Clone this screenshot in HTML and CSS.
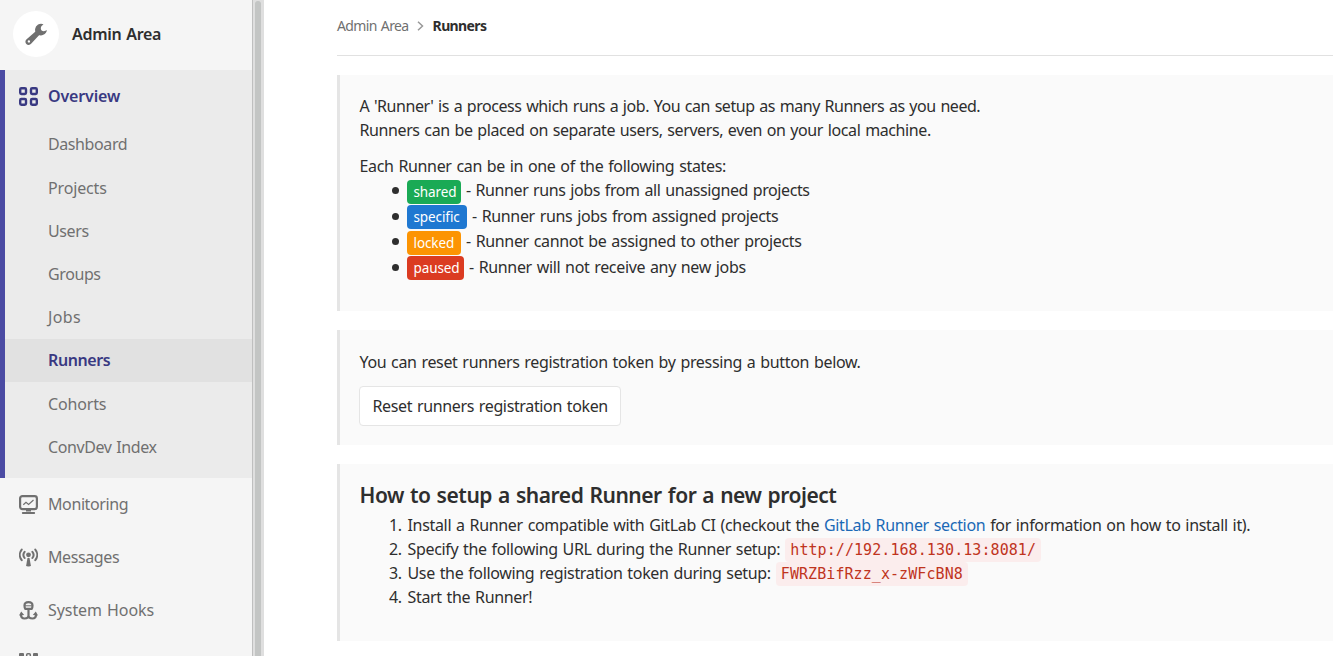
FILE: index.html
```html
<!DOCTYPE html>
<html lang="en">
<head>
<meta charset="utf-8">
<title>Runners · Admin Area</title>
<link rel="stylesheet" href="styles.css">
</head>
<body>
<div class="page">
  <nav class="sidebar">
    <div class="context">
      <span class="avatar"><svg width="22" height="22" viewBox="0 0 22 22"><path fill="#707070" fill-rule="evenodd" d="M11.1 8.1 1.6 16.3a3.2 3.2 0 1 0 4.5 4.5l8.4-9.1zM3.9 17.2a1.2 1.2 0 1 1 0 2.4 1.2 1.2 0 0 1 0-2.4z"/><path fill="#707070" d="M18.5 1.2a6 6 0 0 0-8.4 4.9c-.5 4.2 4 7.7 8.2 5.7 2.3-1 3.6-3.1 3.5-4.8-1.1.6-1.7 1.2-3 1.2-1.7 0-3-1.3-3-3s1.2-2.7 2.7-4z"/></svg></span>
      <span class="context-title">Admin Area</span>
    </div>
    <section class="group">
      <a class="item item-active">
        <svg class="icon" viewBox="0 0 19 19" fill="none" stroke="#393982" stroke-width="2.4"><rect x="1.2" y="1.2" width="5.8" height="5.8" rx="1.2"/><rect x="12" y="1.2" width="5.8" height="5.8" rx="1.2"/><rect x="1.2" y="12" width="5.8" height="5.8" rx="1.2"/><rect x="12" y="12" width="5.8" height="5.8" rx="1.2"/></svg>
        <span class="label-overview">Overview</span>
      </a>
      <ul class="sub">
        <li class="raised"><span>Dashboard</span></li>
        <li class="spaced"><span>Projects</span></li>
        <li><span>Users</span></li>
        <li><span>Groups</span></li>
        <li class="jobs"><span>Jobs</span></li>
        <li class="current raised"><span>Runners</span></li>
        <li class="spaced"><span>Cohorts</span></li>
        <li><span>ConvDev Index</span></li>
      </ul>
    </section>
    <a class="item">
      <svg class="icon" viewBox="0 0 19 19" fill="none" stroke="#707070"><rect x="1.1" y="1.1" width="16.8" height="13" rx="2.3" stroke-width="2.2"/><path d="M4.3 9.8 7 7.2 9.6 9.5 14.5 5" stroke-width="1.2"/><path d="M7 15.5h5" stroke-width="2"/><path d="M3.8 18h11.4" stroke-width="1.9" stroke-linecap="round"/></svg>
      <span>Monitoring</span>
    </a>
    <a class="item">
      <svg class="icon" viewBox="0 0 19 19" fill="none" stroke="#707070" stroke-width="2" stroke-linecap="round"><circle cx="9.5" cy="6.8" r="2.4" fill="#707070" stroke="none"/><path d="M5.6 3.8a5 5 0 0 0 0 6.2M13.4 3.8a5 5 0 0 1 0 6.2M2.7 1.6a8.5 8.5 0 0 0 0 10.6M16.3 1.6a8.5 8.5 0 0 1 0 10.6"/><path fill="#707070" stroke="none" d="M8.5 10h2l1.3 7.2q.1 1.3-2.3 1.3t-2.3-1.3z"/></svg>
      <span>Messages</span>
    </a>
    <a class="item">
      <svg class="icon" viewBox="0 0 19 19" fill="none" stroke="#707070" stroke-width="2.2"><path d="M6.3 7.8q-.8-.7-.8-3.2 0-3.5 4-3.5t4 3.5q0 2.5-.8 3.2z"/><path d="M6 4.8h7" stroke-width="1"/><path d="M9.5 8v7.5M2 13.5q0 4 3.5 4 4 0 4-3 0 3 4 3 3.5 0 3.5-4"/><path fill="#707070" stroke="none" d="M2.2 10.500 5.200 14 0 14.600zM16.800 10.500 19 14.600 13.800 14z"/></svg>
      <span class="label-hooks">System Hooks</span>
    </a>
    <a class="item item-last">
      <svg class="icon" viewBox="0 0 19 19" fill="#707070"><rect width="5" height="5" rx="1"/><rect x="7.7" y=".8" width="3.6" height="7" rx="1" fill="none" stroke="#707070" stroke-width="1.5"/><rect x="14" width="5" height="5" rx="1"/></svg>
    </a>
  </nav>
  <div class="scroll"><div class="thumb"></div></div>
  <main class="content">
    <div class="crumbs">
      <span class="crumb">Admin Area</span>
      <svg width="7" height="10" viewBox="0 0 7 10" fill="none" stroke="#999" stroke-width="1.5"><path d="M1 .8 5.5 5 1 9.2"/></svg>
      <strong class="crumb-now">Runners</strong>
    </div>
    <section class="panel panel-states">
      <p><span class="tight">A 'Runner' is a process which runs a job. You can setup as many Runners as you need.</span><br><span class="snug">Runners can be placed on separate users, servers, even on your local machine.</span></p>
      <p class="lead">Each Runner can be in one of the following states:</p>
      <ul class="states">
        <li><span class="badge green">shared</span><span class="snug">- Runner runs jobs from all unassigned projects</span></li>
        <li><span class="badge blue">specific</span><span>- Runner runs jobs from assigned projects</span></li>
        <li><span class="badge orange">locked</span><span>- Runner cannot be assigned to other projects</span></li>
        <li><span class="badge red">paused</span><span>- Runner will not receive any new jobs</span></li>
      </ul>
    </section>
    <section class="panel panel-token">
      <p>You can reset runners registration token by pressing a button below.</p>
      <button class="btn"><span>Reset runners registration token</span></button>
    </section>
    <section class="panel panel-setup">
      <h4>How to setup a shared Runner for a new project</h4>
      <ol class="steps">
        <li class="install"><b>1.</b><span>Install a Runner compatible with GitLab CI (checkout the <a class="link">GitLab Runner section</a> for information on how to install it).</span></li>
        <li><b>2.</b><span>Specify the following URL during the Runner setup:</span><code>http://192.168.130.13:8081/</code></li>
        <li><b>3.</b><span>Use the following registration token during setup:</span><code>FWRZBifRzz_x-zWFcBN8</code></li>
        <li><b>4.</b><span>Start the Runner!</span></li>
      </ol>
    </section>
  </main>
</div>
</body>
</html>
```
FILE: styles.css
```css
* { box-sizing: border-box; }
body { margin: 0; background: #fff; color: #2e2e2e; font: 16px/24px "Noto Sans", sans-serif; letter-spacing: -0.34px; word-spacing: 1px; overflow: hidden; }
p, ul, ol, h4 { margin: 0; padding: 0; list-style: none; }
.page { display: flex; width: 1333px; height: 656px; overflow: hidden; }
.sidebar { width: 252px; flex: none; height: 656px; overflow: hidden; background: #f5f5f5; color: #707070; letter-spacing: -0.4px; }
.context { height: 70px; display: flex; align-items: center; gap: 13px; padding: 0 0 2px 13px; }
.avatar { width: 46px; height: 46px; border-radius: 50%; background: #fff; display: flex; align-items: center; justify-content: center; }
.context-title { color: #2e2e2e; font-weight: 600; letter-spacing: -0.3px; }
.group { height: 408px; background: #ebebeb; border-left: 5px solid #4b4ba3; }
.item { height: 53px; display: flex; align-items: center; gap: 10px; padding-left: 19px; }
.item > span { padding-bottom: 2px; }
.item-active { padding-left: 14px; color: #393982; font-weight: 600; }
.item-last { align-items: flex-start; padding-top: 16px; }
.label-overview { letter-spacing: -0.15px; }
.label-hooks { letter-spacing: -0.07px; }
.icon { width: 19px; height: 19px; flex: none; }
.sub li { height: 43.2px; display: flex; align-items: center; padding-left: 43px; }
.sub .raised { padding-bottom: 1.5px; }
.sub .spaced { letter-spacing: -0.15px; }
.sub .jobs { letter-spacing: 0.4px; }
.sub .current { background: #e1e1e1; color: #393982; font-weight: 600; }
.scroll { width: 12px; flex: none; background: #dfdfdf; border-left: 1px solid #bfbfbf; padding: 1px 3px 0 2px; }
.thumb { height: 670px; background: #c3c5c4; border-radius: 3px; }
.content { flex: 1; padding-left: 73px; }
.crumbs { height: 56px; border-bottom: 1px solid #e1e1e1; display: flex; align-items: center; padding-bottom: 3px; font-size: 14px; letter-spacing: -0.62px; color: #707070; }
.crumbs svg { margin: 0 9px 0 8px; }
.crumb-now { color: #2e2e2e; }
.panel { border-left: 3px solid #e5e5e5; background: #fafafa; padding: 20px 0 0 19.5px; }
.panel-states { margin-top: 19px; height: 236px; padding-top: 19px; }
.panel-token { margin-top: 19px; height: 115px; }
.panel-setup { margin-top: 19px; height: 177px; padding-top: 18px; }
.tight { letter-spacing: -0.46px; }
.snug { letter-spacing: -0.4px; }
.lead { margin-top: 12px; }
.states { padding: 1px 0 0 32.5px; }
.states li { height: 25.5px; display: flex; align-items: center; }
.states li::before { content: ""; width: 7px; height: 7px; border-radius: 50%; background: #2e2e2e; margin: -2px 8px 0 0; }
.badge { height: 24px; border-radius: 4px; padding: 0 0 0 6.5px; color: #fff; font-size: 13.5px; line-height: 24px; letter-spacing: -0.1px; margin-right: 5px; }
.states li > span + span { margin-top: -3px; }
.green { background: #1aaa55; width: 54px; }
.blue { background: #1f78d1; width: 60px; }
.orange { background: #fc9403; width: 54px; }
.red { background: #db3b21; width: 57px; }
.btn { width: 262px; height: 40px; margin: 12px 0 0 -0.5px; padding: 0 0 0 12.5px; text-align: left; background: #fff; border: 1px solid #e5e5e5; border-radius: 4px; color: inherit; font: inherit; letter-spacing: -0.36px; word-spacing: inherit; display: flex; align-items: center; }
h4 { font-size: 21px; line-height: 26px; font-weight: 600; letter-spacing: -0.45px; }
.steps { padding: 5px 0 0 29.5px; }
.steps li { display: flex; height: 24px; }
.steps .install { letter-spacing: -0.325px; }
.steps b { width: 18.5px; font-weight: 400; }
.link { color: #1b69b6; }
code { height: 24px; margin: 1px 0 0 5px; padding: 0 5px; border-radius: 4px; background: #fbeded; color: #c0341d; font: 15px/24px "DejaVu Sans Mono", monospace; letter-spacing: 0.07px; }
```
